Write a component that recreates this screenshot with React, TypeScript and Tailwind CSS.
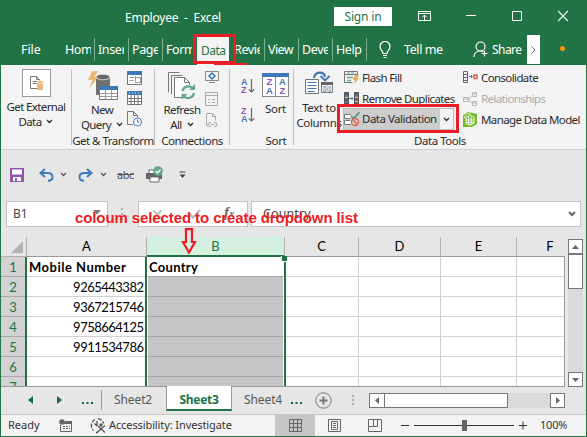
import React from "react";

const Chevron = ({ className = "" }: { className?: string }) => (
  <svg width="7" height="5" viewBox="0 0 7 5" className={className} fill="none" stroke="currentColor" strokeWidth="1.3">
    <path d="M1 1l2.5 2.5L6 1" />
  </svg>
);

/* ---------- title bar ---------- */
const TitleBar = () => (
  <div className="flex h-[35px] items-start pl-[125px] text-white">
    <span className="mt-2 w-[209px] whitespace-pre text-[12px] leading-5 tracking-[-0.22px]">{"Employee  -  Excel"}</span>
    <div className="mt-[7px] flex h-[19px] w-[58px] items-center justify-center bg-white text-[12px] tracking-[-0.15px] text-[#217346]">Sign in</div>
    <svg className="ml-[26px] mt-[10px]" width="13" height="12" fill="none" stroke="white">
      <path d="M.5 1.5h12v9H.5zM.5 3.5h12M6.500 10V5M4 7.500l2.500-2.500L9 7.500" />
    </svg>
    <svg className="ml-[35px] mt-[10px]" width="10" height="12" stroke="white"><path d="M0 5.500h10" /></svg>
    <svg className="ml-[36px] mt-[10px]" width="10" height="12" fill="none" stroke="white"><path d="M.5 1.500h9v9h-9z" /></svg>
    <svg className="ml-[36px] mt-[10px]" width="10" height="12" fill="none" stroke="white" strokeWidth="1.2"><path d="M0 1l10 10M10 1L0 11" /></svg>
  </div>
);

const Tab = ({ children, last }: { children: string; last?: boolean }) => (
  <div className="flex h-[30px] w-[34px] items-center pl-1 pr-[3px]">
    <span className={last ? "whitespace-nowrap" : "w-[26px] overflow-hidden whitespace-nowrap"}>{children}</span>
  </div>
);
const TabRule = () => <div className="mt-[3px] h-[23px] w-0 border-l border-[#7fae92]" />;

const TabBar = () => (
  <div className="flex h-[30px] text-[12.5px] tracking-[-0.4px] text-white">
    <div className="flex h-[30px] w-[60px] items-center pl-[21px] tracking-[-0.1px]">File</div>
    <div className="ml-px flex"><Tab>Home</Tab></div><div className="-ml-px"><TabRule /></div>
    <div className="-ml-px flex"><Tab>Insert</Tab><TabRule /></div>
    <div className="-ml-px flex"><Tab>Page</Tab><TabRule /></div>
    <div className="-ml-px flex"><Tab>Formulas</Tab></div>
    <div className="ml-[1px] mt-[2px] flex h-[28px] w-[32px] items-center bg-[#f3f3f3] pl-[4px] text-[12px] tracking-[-0.55px] text-[#217346]">Data</div>
    <div className="ml-[1px] flex"><Tab>Review</Tab><TabRule /></div>
    <div className="-ml-px flex tracking-[-0.6px]"><Tab last>View</Tab><TabRule /></div>
    <div className="-ml-px flex"><Tab>Developer</Tab><TabRule /></div>
    <div className="-ml-px flex"><Tab last>Help</Tab><TabRule /></div>
    <svg className="ml-[12px] mt-[6px]" width="12" height="18" fill="none" stroke="white" strokeWidth="1.2">
      <path d="M4 12.500C4 9.500 1 9 1 5.500a5 5 0 0 1 10 0C11 9 8 9.500 8 12.500zM4 14.500h4M4.500 16.500h3" />
    </svg>
    <span className="ml-[13px] flex w-[69px] items-center whitespace-nowrap">Tell me</span>
    <svg className="mt-[6px]" width="16" height="18" fill="none" stroke="white" strokeWidth="1.2">
      <circle cx="7.500" cy="5.500" r="4.500" /><path d="M.7 16c.5-4 2.500-6 6.800-6 1.200 0 2 .2 2.800.6M11.500 9.500v6M8.500 12.500h6" />
    </svg>
    <span className="ml-[3px] flex w-[35px] items-center text-[12px] tracking-[-0.55px]">Share</span>
    <div className="flex h-[29px] w-[13px] items-center justify-center bg-white">
      <svg width="5" height="8" fill="none" stroke="#666"><path d="M.5.5L4 4 .5 7.500" /></svg>
    </div>
    <div className="ml-5 mt-[11px] h-[5px] w-[5px] rounded-full bg-[#f7930e]" />
  </div>
);

/* ---------- ribbon icons ---------- */
const TableIcon = ({ banded = false }: { banded?: boolean }) => (
  <svg width="15" height="15" fill="none">
    <path d="M.5.5h14v13H.5z" fill="#fff" stroke="#777" />
    <path d="M0 0h15v4H0z" fill="#3f77b5" />
    {banded ? <path d="M4 4v10M7.500 4v10M11 4v10M0 7.500h15M0 10.500h15" stroke="#777" /> : <path d="M2.500 6.500h5M8.500 5v7M9 6.500h4.500v5H9M2.500 9.500h4" stroke="#999" />}
    {banded && <path d="M2 2h11" stroke="#fff" strokeDasharray="1 2" />}
  </svg>
);
const SortArrow = ({ reverse = false }: { reverse?: boolean }) => (
  <div className="flex h-[17px] w-[14px]">
    <div className="flex w-[7px] flex-col font-['Liberation_Sans'] text-[9px] font-bold leading-[8px]">
      <span className={reverse ? "text-[#9254b0]" : "text-[#3f77b5]"}>{reverse ? "Z" : "A"}</span>
      <span className={reverse ? "text-[#3f77b5]" : "text-[#9254b0]"}>{reverse ? "A" : "Z"}</span>
    </div>
    <svg width="7" height="16" fill="none" stroke="#666" strokeWidth="1.2"><path d="M3.500 1v13M.8 11.300l2.700 2.700 2.700-2.700" /></svg>
  </div>
);
const NewQueryIcon = () => (
  <svg width="30" height="30" fill="none">
    <path d="M8 6h14v18H8z" fill="#707070" /><ellipse cx="15" cy="6" rx="7" ry="2.800" fill="#666" stroke="#f3f3f3" strokeWidth=".8" />
    <path d="M4 0h6L6.500 6H10L1.500 17 4 9H0z" fill="#e9b875" />
    <path d="M11.500 15.500h18v13h-18z" fill="#fff" stroke="#777" /><path d="M11 15h19v4H11z" fill="#3f77b5" />
    <path d="M17.500 19v9M23.500 19v9M12 22.500h17M12 25.500h17" stroke="#999" />
  </svg>
);
const RefreshIcon = () => (
  <svg width="28" height="28" fill="none" stroke="#777">
    <path d="M.5 20V.5h11M3.500 22V3.500h11" /><path d="M6.500 5.500h10l5 5v15h-15z" fill="#fff" /><path d="M16.500 5.500v5h5" />
    <circle cx="20" cy="20" r="7.500" fill="#f3f3f3" stroke="none" />
    <path d="M14.500 19a6 6 0 0 1 10-3M26 21a6 6 0 0 1-10 3.500" stroke="#64a889" strokeWidth="2.200" />
    <path d="M27 12v6h-6zM13.500 28v-6h6z" fill="#64a889" stroke="none" />
  </svg>
);
const TextColumnsIcon = () => (
  <svg width="28" height="24" fill="none">
    <path d="M9 7C10 0 19 0 20 6" stroke="#3f77b5" strokeWidth="2.200" /><path d="M15.500 5L20 9.500 24.500 5" stroke="#3f77b5" strokeWidth="1.800" />
    <path d="M.5 8.500h13v14H.5z" fill="#fff" stroke="#777" /><path d="M2.500 11.500h9M2.500 14.500h9M2.500 17.500h9M2.500 20.500h7" stroke="#3f77b5" />
    <path d="M16.500 11.500h11v10h-11z" fill="#fff" stroke="#777" /><path d="M16 11h12v3H16z" fill="#666" />
    <path d="M22 14v8M16 18h12" stroke="#aaa" /><path d="M18 16h3M23.500 16H26M18 20h3M23.500 20H26" stroke="#3f77b5" />
  </svg>
);
const SortDialogIcon = () => (
  <div className="flex h-[24px] w-[27px] flex-col border border-[#888] bg-white">
    <div className="-mx-px -mt-px h-[4px] bg-[#3f77b5]" />
    <div className="flex flex-1 font-['Liberation_Sans'] text-[9.5px] font-bold leading-[9px]">
      <div className="flex w-[13px] flex-col items-center border-r border-[#888] text-[#9254b0]"><span>Z</span><span className="text-[#3f77b5]">A</span></div>
      <div className="flex w-[12px] flex-col items-center text-[#3f77b5]"><span>A</span><span className="text-[#9254b0]">Z</span></div>
    </div>
  </div>
);
const FlashIcon = () => (
  <svg width="16" height="15" fill="none" stroke="#777">
    <path d="M.5 12.500V1.500h13v4M.5 12.500h8M.5 4.500h13" /><path d="M3 7.500h6M3 10.500h4" stroke="#64a889" strokeWidth="1.500" />
    <path d="M3 3h8" stroke="#64a889" strokeDasharray="3 1" /><path d="M11 5h4l-2 3h2l-5 6 1-4H9z" fill="#e9a850" stroke="none" />
  </svg>
);
const DuplicatesIcon = () => (
  <svg width="16" height="14" fill="none">
    <path d="M.5.5h4v12h-4zM10.500.5h4v12h-4z" fill="#555" stroke="#555" />
    <path d="M1 2h3v3H1zM1 8h3v3H1zM11 2h3v3h-3z" fill="#3f77b5" /><path d="M1 5.500h3M11 5.500h3M11 9.500h3" stroke="#e5b971" strokeWidth="1.500" />
    <path d="M5 6.500h4M7.500 5L9 6.500 7.500 8" stroke="#3f77b5" />
  </svg>
);
const ValidationIcon = () => (
  <svg width="16" height="16" fill="none" stroke="#777">
    <path d="M7 3.500H.5v4H6M6 9.500H.5v4H7" fill="#fff" /><path d="M7 5l2.500 2.500L15.500 1" stroke="#4f9a78" strokeWidth="1.700" />
    <circle cx="11" cy="11" r="3.500" stroke="#d96248" strokeWidth="1.300" /><path d="M8.700 8.700l4.600 4.600" stroke="#d96248" strokeWidth="1.300" />
  </svg>
);
const ConsolidateIcon = () => (
  <svg width="15" height="13" fill="none">
    <path d="M.5.5h4v11h-4zM.5 3.500h4M.5 6.500h4M.5 9.500h4" stroke="#666" /><path d="M6 5.500h3M8 4l1.500 1.500L8 7" stroke="#3f77b5" />
    <path d="M11 4h3v3.500h-3z" stroke="#d96248" strokeWidth="1.400" />
  </svg>
);
const RelationsIcon = () => (
  <svg width="15" height="14" fill="none" stroke="#b8b8b8">
    <path d="M.5 5.500h5v4h-5zM9.500.5h4v4h-4zM9.500 9.500h4v4h-4zM5.500 7L9.500 3M5.500 8l4 3.500M9 2h5M9 11h5M1 7h5" />
  </svg>
);
const ModelIcon = () => (
  <svg width="15" height="15" fill="none">
    <path d="M0 3.500L5 0l9 2v10l-5 3H0z" fill="#76b82a" />
    <path d="M3 5.500l4-2.500 4 2v6l-3 2-5-1zM3 8h8M3 10.500h8M5.500 4.500V12M8 4.500v8" stroke="#fff" strokeWidth=".9" /><path d="M1.500 6c0-3 3-4.500 6-4.500" stroke="#fff" strokeWidth=".8" />
  </svg>
);
const SmallConnections = () => (
  <div className="flex w-[15px] flex-col">
    <svg width="14" height="13" fill="none"><path d="M.5.5h13v9H.5zM4 11.500h6" stroke="#888" /><path d="M7 2l3 3-3 3-3-3z" stroke="#3f77b5" strokeWidth="1.500" /></svg>
    <svg className="mt-[8px]" width="13" height="14" fill="none" stroke="#aaa"><path d="M.5.5h12v13H.5zM.5 3.500h12M3 7.500h2M7 7.500h3M3 10.500h2M7 10.500h3" /></svg>
    <svg className="mt-[7px]" width="14" height="15" fill="none" stroke="#aaa"><path d="M3 12.500H1.500V.5h6l3 3v4M7.500.5v3h3" /><path d="M6 9.500H5a2 2 0 0 0 0 4h1M9 9.500h1a2 2 0 0 1 0 4H9M5.500 11.500h4" /></svg>
  </div>
);

const BigLabel = ({ first, second, arrow }: { first: string; second?: string; arrow?: boolean }) => (
  <div className="flex flex-col items-center whitespace-nowrap leading-[15px]">
    <span>{first}</span>
    {second && <span className="flex items-center">{second}{arrow && <Chevron className="ml-[5px]" />}</span>}
  </div>
);

const Tool = ({ icon, children, muted }: { icon: React.ReactNode; children: string; muted?: boolean }) => (
  <div className={`flex h-[21px] items-center whitespace-nowrap ${muted ? "text-[#ababab]" : ""}`}>
    <div className="w-[17px] shrink-0">{icon}</div><span className="ml-px">{children}</span>
  </div>
);

const Ribbon = () => (
  <div className="ml-px flex h-[84px] border-r border-[#217346] bg-[#f3f3f3] text-[11.5px] tracking-[-0.62px] text-[#2b2b2b]">
    <section className="flex w-[70px] flex-col items-center pt-[4px]">
      <div className="mb-[2px] ml-px flex h-[28px] w-[29px] items-center justify-center border border-[#999] bg-white">
        <svg width="14" height="15" fill="none"><path d="M.5.5h6l3 3v9h-9z" stroke="#777" /><path d="M6.500.5v3h3M2.500 5.500h5M2.500 7.500h4" stroke="#777" /><path d="M7 6h6v8H7z" fill="#e9b875" /><ellipse cx="10" cy="6" rx="3" ry="1.500" fill="#e9b875" stroke="#fff" strokeWidth=".5" /></svg>
      </div>
      <BigLabel first="Get External" second="Data" arrow />
    </section>
    <section className="mt-[4px] flex h-[76px] w-[83px] flex-col border-l border-[#bdbdbd]">
      <div className="flex h-[63px] shrink-0">
        <div className="flex w-[55px] flex-col items-center pl-[7px] pt-[2px]"><NewQueryIcon /><div className="pr-[2px] pt-[2px]"><BigLabel first="New" second="Query" arrow /></div></div>
        <div className="flex flex-col gap-[5px] pt-[2px]">
          <TableIcon /><TableIcon banded />
          <svg width="16" height="16" fill="none" stroke="#777"><path d="M6 13.500H.5V.5h6l4 4v2M6.500.5v4h4" /><circle cx="10.500" cy="11" r="4" fill="#fff" stroke="#3f77b5" /><path d="M10.500 8.500V11h2" /></svg>
        </div>
      </div>
      <div className="whitespace-nowrap text-center leading-[17px] tracking-[-0.5px]">Get &amp; Transform</div>
    </section>
    <section className="mt-[4px] flex h-[76px] w-[75px] flex-col border-l border-[#bdbdbd]">
      <div className="flex h-[63px] shrink-0">
        <div className="flex w-[50px] flex-col items-center pl-[4px] pt-[3px]"><RefreshIcon /><div className="pt-[3px]"><BigLabel first="Refresh" second="All" arrow /></div></div>
        <div className="pt-[2px]"><SmallConnections /></div>
      </div>
      <div className="text-center leading-[17px] tracking-[-0.5px]">Connections</div>
    </section>
    <section className="mt-[4px] flex h-[76px] w-[64px] flex-col border-l border-[#bdbdbd]">
      <div className="flex h-[63px] shrink-0">
        <div className="flex w-[32px] flex-col gap-[12px] pl-[11px] pt-[9px]"><SortArrow /><SortArrow reverse /></div>
        <div className="flex w-[27px] flex-col items-center pt-[4px]"><SortDialogIcon /><div className="pt-[4px] tracking-[-0.3px]"><BigLabel first="Sort" /></div></div>
      </div>
      <div className="pl-[29px] text-center leading-[17px] tracking-[-0.3px]">Sort</div>
    </section>
    <section className="mt-[4px] flex h-[76px] flex-1 flex-col border-l border-[#bdbdbd]">
      <div className="flex h-[63px] shrink-0">
        <div className="flex w-[50px] flex-col items-center pt-[2px]"><TextColumnsIcon /><div className="pt-[5px] tracking-[-0.35px]"><BigLabel first="Text to" second="Columns" /></div></div>
        <div className="w-[119px]">
          <div className="-mt-[2px]"><Tool icon={<FlashIcon />}>Flash Fill</Tool></div>
          <Tool icon={<DuplicatesIcon />}>Remove Duplicates</Tool>
          <div className="flex h-[22px] w-[111px] items-center border border-[#bbb] bg-[#cdcdcd] -mt-px -ml-px">
            <div className="w-[96px] tracking-[-0.5px]"><Tool icon={<ValidationIcon />}>Data Validation</Tool></div>
            <div className="flex h-full flex-1 items-center justify-center bg-[#f3f3f3]"><Chevron /></div>
          </div>
        </div>
        <div className="-mt-[2px]">
          <Tool icon={<ConsolidateIcon />}>Consolidate</Tool>
          <Tool icon={<RelationsIcon />} muted>Relationships</Tool>
          <Tool icon={<ModelIcon />}>Manage Data Model</Tool>
        </div>
      </div>
      <div className="pl-[120px] leading-[17px] tracking-[-0.45px]">Data Tools</div>
    </section>
  </div>
);

/* ---------- quick access and formula bar ---------- */
const Undo = ({ flip = false }: { flip?: boolean }) => (
  <svg width="15" height="14" viewBox="0 0 15 14" className={flip ? "-scale-x-100" : ""} fill="none" stroke="#4079bb" strokeWidth="2">
    <path d="M6 1L1.500 5 6 9M2 5h6.500c3 0 5 1.700 5 4 0 2.300-2 3.700-4.500 3.700" />
  </svg>
);
const QuickAccess = () => (
  <div className="mx-px flex h-[52px] items-center border-t border-[#cfcfcf] bg-[#e6e6e6] pb-[2px] pl-[9px] text-[#555]">
    <svg width="14" height="14"><path d="M0 0h14v14H0z" fill="#9059af" /><path d="M2 1.500h10v5H2zM3 9h8v4H3z" fill="#fff" /><path d="M5 10h2v3H5z" fill="#9059af" /></svg>
    <div className="ml-[15px]"><Undo /></div><Chevron className="ml-[6px]" />
    <div className="ml-[11px]"><Undo flip /></div><Chevron className="ml-[7px]" />
    <span className="ml-[10px] w-[17px] text-[11px] leading-4 tracking-[-0.5px] line-through">abc</span>
    <svg className="ml-[12px]" width="18" height="18" fill="none"><path d="M3 4h9v4H3z" fill="#fff" stroke="#666" /><path d="M0 7h16v6H0z" fill="#666" /><path d="M4 11h9v5H4z" fill="#fff" stroke="#666" /><circle cx="12" cy="5" r="4.800" fill="#64a889" /><path d="M9.500 5l2 2 3-3.500" stroke="#fff" strokeWidth="1.200" /></svg>
    <svg className="ml-[15px]" width="7" height="8"><path d="M.5 1h6" stroke="#444" /><path d="M.5 3.500h6l-3 3.500z" fill="#444" /></svg>
  </div>
);
const FormulaBar = () => (
  <div className="mx-px flex h-[36px] items-start bg-[#e6e6e6] pl-[5px] text-[12px] text-[#444]">
    <div className="flex h-[26px] w-[102px] items-center justify-between border border-[#c3c3c3] bg-white pl-[6px] pr-[6px]">
      <span>B1</span><svg width="8" height="5" className="mb-1"><path d="M0 0h8L4 4.500z" fill="#777" /></svg>
    </div>
    <svg className="ml-[13px] mt-[7px]" width="3" height="14" fill="#aaa"><path d="M0 0h2v2H0zM0 5h2v2H0zM0 10h2v2H0z" /></svg>
    <div className="ml-[14px] flex h-[26px] w-[110px] items-center border border-[#c3c3c3] bg-white pl-[14px]">
      <svg width="9" height="9" stroke="#bbb" strokeWidth="1.800"><path d="M0 0l9 9M9 0L0 9" /></svg>
      <svg className="ml-[27px]" width="12" height="10" fill="none" stroke="#bbb" strokeWidth="2"><path d="M1 5l3 3.500L11 1" /></svg>
      <span className="mb-1 ml-[23px] font-['Liberation_Serif'] text-[15px] font-bold italic leading-4 text-[#666]">f<span className="text-[11px]">x</span></span>
    </div>
    <div className="ml-[3px] flex h-[26px] w-[330px] items-center border border-[#c3c3c3] bg-white pl-[11px] pr-[4px]">
      <span className="flex-1 text-[12.5px] tracking-[0.1px]">Country</span>
      <svg width="8" height="6" fill="none" stroke="#666" strokeWidth="2"><path d="M1 1l3 3 3-3" /></svg>
    </div>
  </div>
);

/* ---------- worksheet ---------- */
const columns = [
  { name: "C", width: "w-[74px]" },
  { name: "D", width: "w-[82px]" },
  { name: "E", width: "w-[76px]" },
  { name: "F", width: "w-[48px]" },
];
const records = ["Mobile Number", "9265443382", "9367215746", "9758664125", "9911534786", "", ""];

const Worksheet = () => (
  <div className="mx-px flex h-[150px] bg-[#e6e6e6]">
    <div className="flex h-[150px] w-[564px] flex-col overflow-hidden border-b border-[#999] font-['Lato','Noto_Sans',sans-serif] text-[13px]">
      <div className="flex h-[20px] shrink-0 text-center leading-[19px]">
        <div className="flex w-[26px] items-end justify-end border-b border-r border-[#b0b0b0] pb-[3px] pr-[3px]"><svg width="12" height="12"><path d="M12 0v12H0z" fill="#b3b3b3" /></svg></div>
        <div className="w-[120px] border-b border-r border-[#999] border-r-[#b0b0b0]">A</div>
        <div className="w-[138px] border-b-2 border-r border-[#217346] border-r-[#b0b0b0] bg-[#d3f0e0] text-[#217346]">B</div>
        {columns.map((c) => <div key={c.name} className={`${c.width} border-b border-[#999] ${c.name === "F" ? "pl-[18px]" : "border-r border-r-[#b0b0b0]"}`}>{c.name}</div>)}
      </div>
      {records.map((value, i) => (
        <div key={i} className="flex h-[20px] shrink-0 leading-[21px]">
          <div className="w-[24px] border-b border-[#ababab] bg-[#d2d2d2] text-center text-[#217346]">{i + 1}</div>
          <div className="w-[2px] bg-[#217346]" />
          <div className={`w-[118px] whitespace-nowrap border-b border-[#d0d0d0] bg-white text-black ${i === 0 ? "pl-[2px] font-bold tracking-[0.5px]" : "pr-[1.5px] text-right tracking-[-0.5px]"}`}>{value}</div>
          <div className="w-[2px] bg-[#217346]" />
          <div className={`w-[137px] border-b border-x border-white pl-px font-bold tracking-[0.3px] text-black ${i === 0 ? "border-b-[#a6a6a6] bg-white" : "border-b-[#a6a6a6] bg-[#c6c6c6]"}`}>{i === 0 ? "Country" : ""}</div>
          <div className="w-[2px] bg-[#217346]" />
          <div className="w-[73px] border-b border-r border-[#d0d0d0] bg-white" />
          <div className="w-[82px] border-b border-r border-[#d0d0d0] bg-white" />
          <div className="w-[76px] border-b border-r border-[#d0d0d0] bg-white" />
          <div className="w-[48px] border-b border-r border-[#d0d0d0] border-r-[#999] bg-white" />
        </div>
      ))}
    </div>
    <div className="ml-[3px] mt-[2px] flex h-[148px] w-[15px] flex-col bg-[#dadada]">
      <div className="flex h-[15px] items-center justify-center border border-[#777] bg-white"><svg width="7" height="4"><path d="M0 4h7L3.500 0z" fill="#666" /></svg></div>
      <div className="h-[35px] border border-[#777] bg-white" />
      <div className="mt-auto flex h-[15px] items-center justify-center border border-[#777] bg-white"><svg width="7" height="4"><path d="M0 0h7L3.500 4z" fill="#666" /></svg></div>
    </div>
  </div>
);

const SheetTabs = () => (
  <div className="mx-px flex h-[27px] items-start bg-[#e6e6e6] text-[12px] text-[#555]">
    <svg className="ml-[27px] mt-[9px]" width="5" height="8"><path d="M5 0v8L0 4z" fill="#146c3b" /></svg>
    <svg className="ml-[24px] mt-[9px]" width="5" height="8"><path d="M0 0v8l5-4z" fill="#146c3b" /></svg>
    <svg className="ml-[20px] mt-[15px]" width="11" height="2" fill="#146c3b"><path d="M0 0h2v2H0zM4.500 0h2v2h-2zM9 0h2v2H9z" /></svg>
    <div className="ml-[8px] mt-[3px] h-[20px] border-l border-[#999]" />
    <span className="ml-[12px] w-[52px] leading-[26px] tracking-[-0.1px]">Sheet2</span>
    <div className="-mt-px h-[25px] w-[66px] border-x border-b-2 border-[#999] border-b-[#217346] bg-white text-center font-bold leading-[27px] tracking-[-0.3px] text-[#217346]">Sheet3</div>
    <span className="ml-[12px] w-[47px] leading-[26px] tracking-[-0.1px]">Sheet4</span>
    <svg className="mt-[15px]" width="11" height="2" fill="#146c3b"><path d="M0 0h2v2H0zM4.500 0h2v2h-2zM9 0h2v2H9z" /></svg>
    <svg className="ml-[13px] mt-[5px]" width="17" height="17" fill="none" stroke="#777"><circle cx="8.500" cy="8.500" r="7.700" /><path d="M8.500 4.500v8M4.500 8.500h8" strokeWidth="2" /></svg>
    <svg className="ml-[20px] mt-[8px]" width="2" height="11" fill="#aaa"><path d="M0 0h2v2H0zM0 4h2v2H0zM0 8h2v2H0z" /></svg>
    <div className="ml-[15px] mt-[6px] flex h-[15px] w-[196px] bg-[#dadada]">
      <div className="flex w-[16px] items-center justify-center border border-[#777] bg-white"><svg width="4" height="7"><path d="M4 0v7L0 3.500z" fill="#666" /></svg></div>
      <div className="-ml-px w-[124px] border border-[#777] bg-white" />
      <div className="ml-auto flex w-[15px] items-center justify-center border border-[#777] bg-white"><svg width="4" height="7"><path d="M0 0v7l4-3.500z" fill="#666" /></svg></div>
    </div>
  </div>
);

const StatusBar = () => (
  <div className="mx-px flex h-[22px] items-center border-t border-[#c6c6c6] bg-[#f3f3f3] text-[11px] text-[#333]">
    <span className="ml-[7px] w-[51px]">Ready</span>
    <svg width="14" height="14" fill="none"><path d="M1.500 6v6.500h11v-10H7" stroke="#666" /><path d="M7 2h6v3H3z" fill="#666" /><circle cx="3" cy="3" r="2.800" fill="#666" /><path d="M4 7.500h7M4 9.500h7" stroke="#666" strokeDasharray="2 1" /></svg>
    <svg className="ml-[17px]" width="17" height="16" fill="none" stroke="#555" strokeWidth="1.300"><path d="M5 1.500C1 4 0 9 3.500 12.500M8 .5c3 .5 5 2.500 5.500 5M6 14.500h2" strokeDasharray="4 1.500" /><path d="M7 3v5M4.500 5.500L7 8M7 14.500l8-7M8 8l7 6.500" /><circle cx="11" cy="7" r="1" fill="#555" /></svg>
    <span className="ml-[2px] w-[166px] whitespace-nowrap tracking-[-0.1px]">Accessibility: Investigate</span>
    <div className="flex h-[21px] w-[40px] items-center justify-center bg-[#c6c6c6]"><svg width="13" height="13" fill="none" stroke="#666"><path d="M.5.5h12v12H.5zM4.500.5v12M8.500.5v12M.5 4.500h12M.5 8.500h12" /></svg></div>
    <svg className="ml-[13px]" width="13" height="13" fill="none" stroke="#666"><path d="M.5.5h12v12H.5zM3.500 2.500h6v8h-6zM5 4.500h3M5 6.500h3M5 8.500h3" /></svg>
    <svg className="ml-[27px]" width="14" height="13" fill="none" stroke="#666"><path d="M.5.5h13v12H.5zM5.500.5v7M9.500.5v7M.5 7.500h9" /></svg>
    <svg className="ml-[19px]" width="8" height="9"><path d="M0 4.500h8" stroke="#333" /></svg>
    <div className="ml-[5px] flex h-[11px] w-[100px] items-center">
      <div className="h-px w-[48px] bg-[#333]" /><div className="h-[11px] w-[5px] bg-[#666]" /><div className="h-px flex-1 bg-[#333]" />
    </div>
    <svg className="ml-[5px]" width="8" height="9"><path d="M0 4.500h8M4 .5v8" stroke="#333" /></svg>
    <span className="ml-[13px] tracking-[-0.2px]">100%</span>
  </div>
);

/* Red callouts drawn over the workbook */
const Annotations = () => (
  <>
    <div className="absolute left-[193px] top-[34px] h-[30px] w-[43px] border-[3px] border-[#ee1c25]" />
    <div className="absolute left-[214px] top-[63px] h-[2px] w-[34px] bg-[#ee1c25]" />
    <div className="absolute left-[337px] top-[104px] h-[29px] w-[122px] border-[3px] border-[#ee1c25]" />
    <div className="absolute left-[75px] top-[208px] whitespace-nowrap font-['Liberation_Sans',sans-serif] text-[15px] font-bold leading-5 tracking-[-0.1px] text-[#ee1c25]">coloum selected to create dropdown list</div>
    <svg className="absolute left-[181px] top-[228px]" width="16" height="28" fill="none" stroke="#ee1c25" strokeWidth="2.200"><path d="M5 1.200h6V14h3L8 24.500 2 14h3z" /></svg>
    <div className="absolute left-[281px] top-[256px] h-[6px] w-[6px] border-b border-l border-white bg-[#217346]" />
  </>
);

export default function App() {
  return (
    <div className="relative h-[437px] w-[587px] overflow-hidden bg-[#217346] font-['Noto_Sans',sans-serif]">
      <TitleBar />
      <TabBar />
      <Ribbon />
      <QuickAccess />
      <FormulaBar />
      <Worksheet />
      <SheetTabs />
      <StatusBar />
      <Annotations />
    </div>
  );
}
